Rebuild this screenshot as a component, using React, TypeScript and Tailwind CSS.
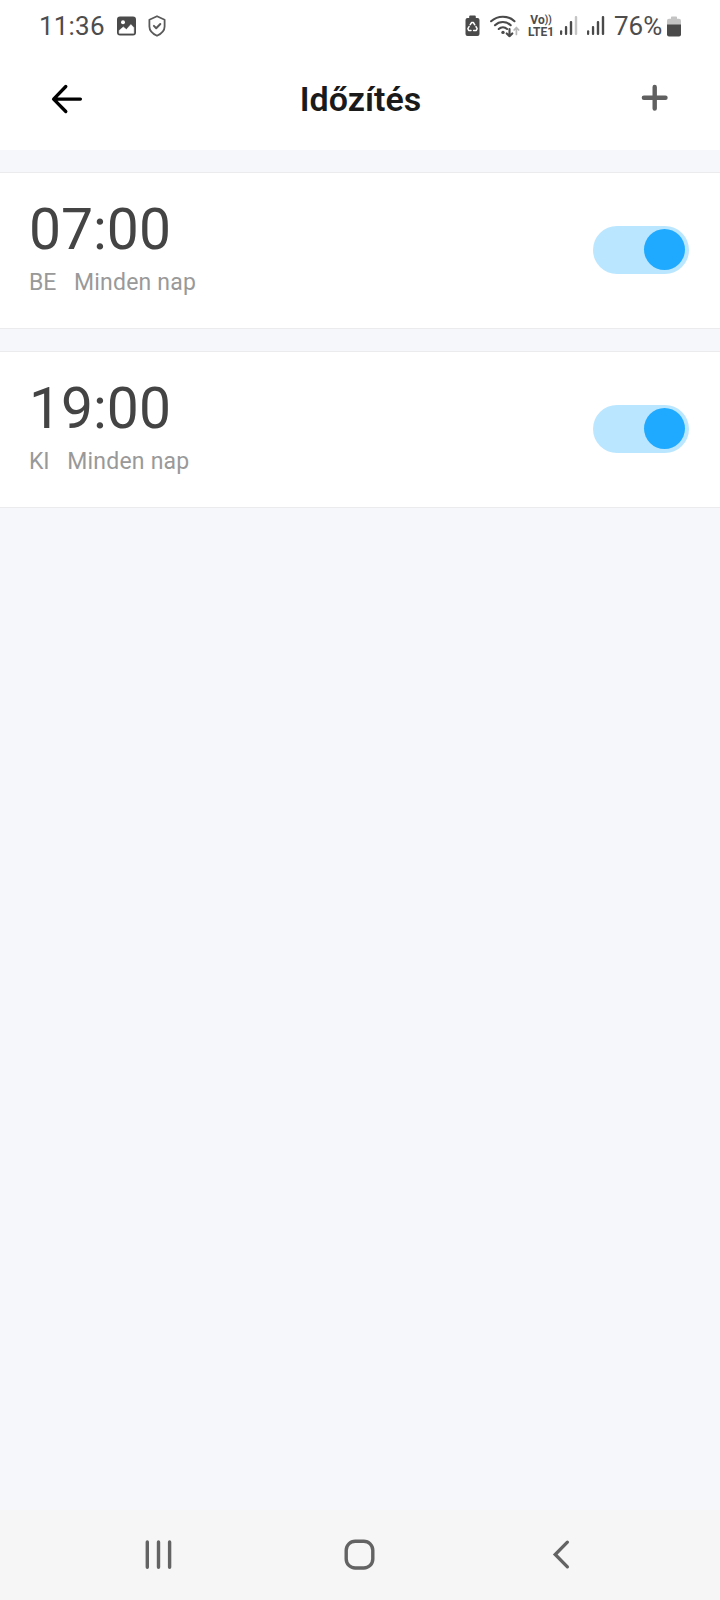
import { useState } from "react";

type Timer = {
  id: number;
  time: string;
  action: string;
  repeat: string;
};

const timers: Timer[] = [
  { id: 1, time: "07:00", action: "BE", repeat: "Minden nap" },
  { id: 2, time: "19:00", action: "KI", repeat: "Minden nap" },
];

function SignalBars({ weak = false }: { weak?: boolean }) {
  return (
    <svg width="18" height="20" viewBox="0 0 18 20" fill="#4a4a4a">
      <rect x="0" y="14.3" width="2.2" height="4.7" rx="1" />
      <rect x="4.9" y="10" width="2.3" height="9" rx="1" />
      <rect x="9.8" y="5" width="2.4" height="14" rx="1" />
      <rect
        x="14.8"
        y="0"
        width="2.4"
        height="19"
        rx="1"
        fill={weak ? "#c4c4c4" : "#4a4a4a"}
      />
    </svg>
  );
}

function StatusBar() {
  return (
    <div className="flex h-[52px] items-center pl-[39px] pr-[39px] text-[#4d4d4d]">
      <span className="w-[78px] text-[26px] leading-[52px] tracking-[0.2px]">
        11:36
      </span>
      <svg width="19" height="20" viewBox="0 0 19 20" className="block">
        <rect y="0.5" width="19" height="19" rx="3" fill="#4a4a4a" />
        <circle cx="6" cy="6.3" r="2" fill="#fff" />
        <path
          d="M2.2 17.3v-2.8L6.3 11l3.1 2.6 4.5-5 2.9 3v5.7z"
          fill="#fff"
          stroke="#fff"
          strokeWidth="0.6"
          strokeLinejoin="round"
        />
      </svg>
      <svg
        width="18"
        height="22"
        viewBox="0 0 18 22"
        fill="none"
        stroke="#5a5a5a"
        strokeWidth="1.8"
        strokeLinecap="round"
        strokeLinejoin="round"
        className="ml-3"
      >
        <path d="M9 1.2 16.6 4.8v6.7c0 4.3-3.3 7.3-7.6 9.3-4.3-2-7.6-5-7.6-9.3V4.8z" />
        <path d="m5.9 10.9 2.3 2.3 4.1-4.2" strokeWidth="2" />
      </svg>

      <div className="ml-auto flex items-center">
        <svg width="15" height="22" viewBox="0 0 15 22">
          <path
            d="M4.2 3V1.4Q4.2.5 5.1.5h4.8q.9 0 .9.9V3h1.7q2 0 2 2v14q0 2-2 2h-10q-2 0-2-2V5q0-2 2-2z"
            fill="#4a4a4a"
          />
          <g
            fill="none"
            stroke="#fff"
            strokeWidth="1.5"
            strokeLinecap="round"
            strokeLinejoin="round"
          >
            <path d="M5.2 9.7 6.7 7.5h1.6l1.5 2.3" />
            <path d="m11 11.6 1.1 2.1-.8 1.8H8.6" />
            <path d="M6 15.5H3.7l-.8-1.8 1.2-2.2" />
          </g>
        </svg>
        <svg
          width="30"
          height="24"
          viewBox="0 0 30 24"
          fill="none"
          stroke="#4a4a4a"
          strokeWidth="2.1"
          strokeLinecap="round"
          strokeLinejoin="round"
          className="ml-2.5"
        >
          <path d="M1.1 7.2C7.8 1.2 18 1.2 24.5 7.2" />
          <path d="M5 11.2c4.5-4.2 11.2-4.2 15.7 0" />
          <path d="M8.7 15c2.5-2.2 6-2.2 8.4 0" />
          <circle cx="13" cy="18.4" r="1.7" fill="#4a4a4a" stroke="none" />
          <path d="M19.5 15v7.2m-2.8-2.8 2.8 2.8 2.8-2.8" />
          <path
            d="M26.4 20.5v-6.8m-2.3 2.3 2.3-2.4 2.3 2.4"
            stroke="#b8b8b8"
            strokeWidth="1.7"
          />
        </svg>
        <div className="ml-[7.5px] flex w-[27px] flex-col items-center text-[12px] font-bold leading-[12px]">
          <span className="flex items-center">
            Vo<span className="text-[10px]">))</span>
          </span>
          <span>LTE1</span>
        </div>
        <div className="ml-[5.5px] flex gap-[9px]">
          <SignalBars weak />
          <SignalBars />
        </div>
        <span className="ml-[9px] w-[53px] text-[26px] leading-[52px]">
          76%
        </span>
        <svg width="14" height="21" viewBox="0 0 14 21">
          <path
            d="M4 2.7V1.2Q4 .4 4.8.4h4.4q.8 0 .8.8v1.5h2q2 0 2 2V9H0V4.7q0-2 2-2z"
            fill="#c4c4c4"
          />
          <path d="M0 8.5h14v10q0 2-2 2H2q-2 0-2-2z" fill="#4a4a4a" />
        </svg>
      </div>
    </div>
  );
}

function Header() {
  return (
    <header className="flex h-[98px] items-start justify-between pl-[51px] pr-[51px]">
      <button className="mt-8" aria-label="Vissza">
        <svg
          width="32"
          height="30"
          viewBox="0 0 32 30"
          fill="none"
          stroke="#000"
          strokeWidth="3.3"
          strokeLinecap="round"
          strokeLinejoin="round"
          className="block"
        >
          <path d="M14.8 2.5 2.6 15.1l12.2 12.4M3 15.1h26.4" />
        </svg>
      </button>
      <h1 className="mt-[27px] -ml-[3px] text-[34px] font-semibold leading-10 text-[#1a1a1a]">
        Időzítés
      </h1>
      <button className="mt-8" aria-label="Hozzáadás">
        <svg
          width="28"
          height="28"
          viewBox="0 0 28 28"
          stroke="#606060"
          strokeWidth="4.4"
          strokeLinecap="round"
          className="block"
        >
          <path d="M13.7 2.9v21.6M2.9 13.7h21.6" />
        </svg>
      </button>
    </header>
  );
}

function Toggle() {
  const [on, setOn] = useState(true);
  return (
    <button
      role="switch"
      aria-checked={on}
      onClick={() => setOn(!on)}
      className={`flex h-12 w-24 items-center rounded-full px-1 pb-px ${
        on ? "justify-end bg-[#bae7ff]" : "justify-start bg-[#dddddd]"
      }`}
    >
      <span
        className={`size-[41.5px] rounded-full ${on ? "bg-[#20aaff]" : "bg-white"}`}
      />
    </button>
  );
}

function TimerRow({ timer }: { timer: Timer }) {
  return (
    <li className="flex h-[157px] items-start justify-between border-y border-[#ebebed] bg-white pl-[29px] pr-[31px]">
      <div>
        <p className="mt-[26px] text-[57px] leading-[62px] text-[#444444]">
          {timer.time}
        </p>
        <p className="mt-[7px] flex gap-[18px] text-[23px] leading-[30px] text-[#999999]">
          <span className="tracking-[-0.2px]">{timer.action}</span>
          <span className="tracking-[0.2px]">{timer.repeat}</span>
        </p>
      </div>
      <div className="mt-[53px]">
        <Toggle />
      </div>
    </li>
  );
}

function NavBar() {
  return (
    <nav className="flex h-[90px] items-center bg-[#f6f6f6] pl-[143px]">
      <svg
        width="31"
        height="32"
        viewBox="0 0 31 32"
        stroke="#636363"
        strokeWidth="3.4"
        strokeLinecap="round"
      >
        <path d="M4.3 3v25.3M15.5 3v25.3M26.6 3v25.3" />
      </svg>
      <svg
        width="32"
        height="32"
        viewBox="0 0 32 32"
        fill="none"
        stroke="#636363"
        strokeWidth="3.4"
        className="ml-[169px]"
      >
        <rect x="3.2" y="2.2" width="26.6" height="26.8" rx="9" />
      </svg>
      <svg
        width="20"
        height="32"
        viewBox="0 0 20 32"
        fill="none"
        stroke="#636363"
        strokeWidth="3.3"
        strokeLinecap="round"
        strokeLinejoin="miter"
        className="ml-[176px]"
      >
        <path d="M16.4 3.2 4.2 15.5l12.2 12.3" />
      </svg>
    </nav>
  );
}

export default function App() {
  return (
    <main className="flex h-[1600px] w-[720px] flex-col bg-[#f5f7fb] font-[Roboto,'Liberation_Sans',sans-serif]">
      <div className="bg-white">
        <StatusBar />
        <Header />
      </div>
      <ul className="mt-[22px] flex flex-1 flex-col gap-[22px]">
        {timers.map((timer) => (
          <TimerRow key={timer.id} timer={timer} />
        ))}
      </ul>
      <NavBar />
    </main>
  );
}
